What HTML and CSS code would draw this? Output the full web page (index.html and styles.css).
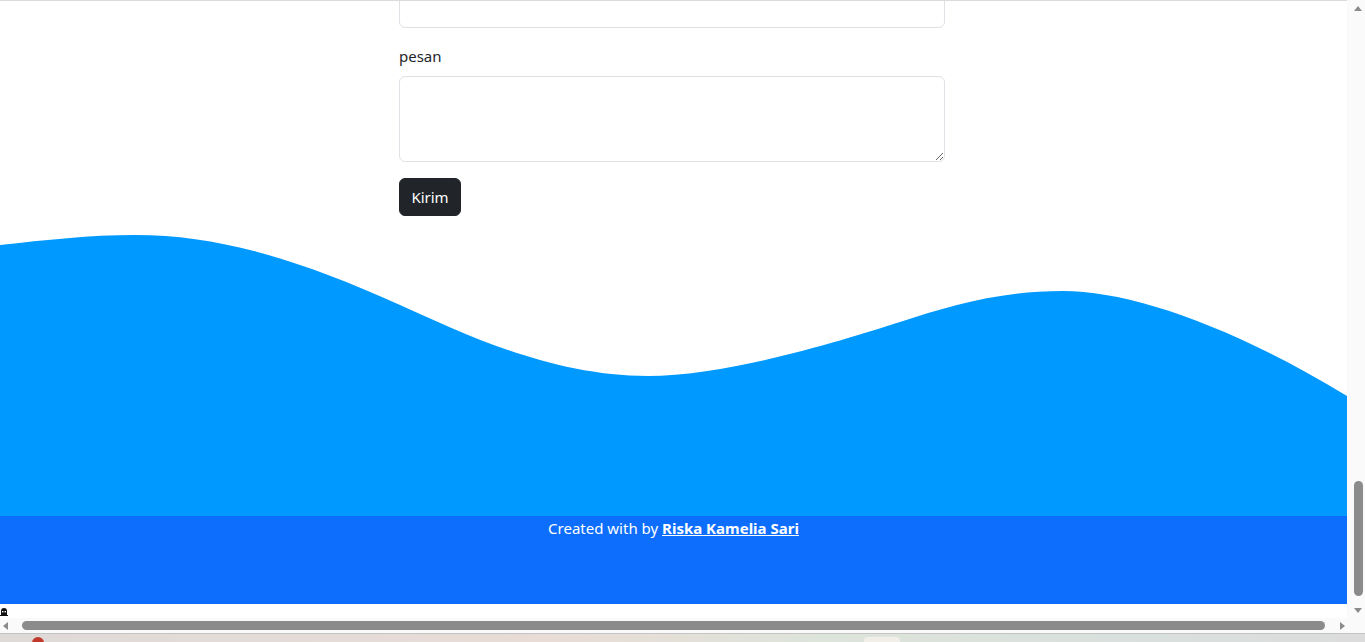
FILE: index.html
```html
<!DOCTYPE html>
<html lang="id">
<head>
<meta charset="utf-8">
<title>Kontak</title>
<link rel="stylesheet" href="styles.css">
</head>
<body>
<div class="screen">
  <div class="viewport">
    <form class="contact-form">
      <div class="field">
        <input class="form-control" type="email">
      </div>
      <div class="field">
        <label class="form-label" for="pesan">pesan</label>
        <textarea class="form-control textarea" id="pesan"></textarea>
      </div>
      <button class="btn-dark" type="button">Kirim</button>
    </form>
    <svg class="wave" viewBox="0 216 1347 300" preserveAspectRatio="none" xmlns="http://www.w3.org/2000/svg">
      <path fill="#0099ff" d="M0,245 C45,240 90,235 135,235 C220,235 300,260 400,305 C460,332 550,376 648,376 C730,376 850,338 900,322 C950,306 1000,291 1063,291 C1130,291 1230,325 1347,396 L1347,516 L0,516 Z"/>
    </svg>
    <footer class="footer">
      <p>Created with by <a href="#">Riska Kamelia Sari</a></p>
    </footer>
    <svg class="corner-icon" viewBox="0 0 8 10" xmlns="http://www.w3.org/2000/svg">
      <path d="M1,4 Q1,1 4,1 Q7,1 7,4 L7,8 L1,8 Z" fill="#111"/>
      <rect x="2" y="4" width="1.4" height="1.4" fill="#fff"/>
      <rect x="4.6" y="4" width="1.4" height="1.4" fill="#fff"/>
      <rect x="0" y="8" width="8" height="1" fill="#111"/>
    </svg>
  </div>
  <div class="vscroll">
    <span class="arrow up"></span>
    <div class="vtrack"><span class="vthumb"></span></div>
    <span class="arrow down"></span>
  </div>
  <div class="hscroll">
    <span class="arrow left"></span>
    <span class="hthumb"></span>
    <span class="arrow right"></span>
  </div>
  <div class="hcorner"></div>
  <div class="taskbar">
    <span class="tb-dot"></span>
    <span class="tb-btn"></span>
  </div>
</div>
</body>
</html>
```

FILE: styles.css
```css
html, body {
  margin: 0;
  padding: 0;
  height: 642px;
  overflow: hidden;
  background: #fff;
}

body {
  font-family: "Noto Sans", "Open Sans", sans-serif;
  font-size: 16px;
  line-height: 24px;
  color: #212529;
}

.screen {
  display: grid;
  grid-template-columns: 1347px 18px;
  grid-template-rows: 618px 15px 9px;
  width: 1365px;
  height: 642px;
}

.viewport {
  grid-column: 1;
  grid-row: 1;
  position: relative;
  overflow: hidden;
  border-top: 1px solid #dcdcdc;
  display: flex;
  flex-direction: column;
  background: #fff;
}

.contact-form {
  width: 546px;
  margin: -11px 0 0 399px;
  display: flex;
  flex-direction: column;
  align-items: flex-start;
}

.field {
  width: 100%;
  margin-bottom: 16px;
  display: flex;
  flex-direction: column;
}

.form-label {
  margin-bottom: 8px;
  line-height: 24px;
  font-size: 15px;
}

.form-control {
  box-sizing: border-box;
  width: 100%;
  height: 38px;
  border: 1px solid #dee2e6;
  border-radius: 6px;
  background: #fff;
  font: inherit;
  padding: 6px 12px;
  margin: 0;
  outline: none;
}

.textarea {
  height: 86px;
  resize: vertical;
  display: block;
}

.btn-dark {
  box-sizing: border-box;
  height: 38px;
  width: 62px;
  padding: 0;
  border: 1px solid #212529;
  border-radius: 6px;
  background: #212529;
  color: #fff;
  font-family: inherit;
  font-size: 15px;
  line-height: 24px;
  cursor: pointer;
}

.wave {
  display: block;
  width: 1347px;
  height: 300px;
  flex: none;
}

.footer {
  flex: none;
  height: 88px;
  background: #0d6efd;
  color: #fff;
  text-align: center;
}

.footer p {
  margin: 0;
  font-size: 15px;
  line-height: 24px;
}

.footer a {
  color: #fff;
  font-weight: 700;
  text-decoration: underline;
}

.corner-icon {
  position: absolute;
  left: 0;
  top: 606px;
  width: 8px;
  height: 10px;
}

/* vertical scrollbar */
.vscroll {
  grid-column: 2;
  grid-row: 1;
  background: #fafafa;
  display: flex;
  flex-direction: column;
  align-items: flex-start;
}

.arrow {
  width: 0;
  height: 0;
  display: block;
  flex: none;
}

.arrow.up {
  margin-top: 6px;
  margin-left: 7px;
  border-left: 4px solid transparent;
  border-right: 4px solid transparent;
  border-bottom: 5px solid #8b8b8b;
}

.arrow.down {
  margin: 0 0 5px 7px;
  border-left: 4px solid transparent;
  border-right: 4px solid transparent;
  border-top: 5px solid #8b8b8b;
}

.vtrack {
  flex: 1;
  display: flex;
  flex-direction: column;
  justify-content: flex-end;
  padding: 0 0 12px 7px;
}

.vthumb {
  display: block;
  width: 9px;
  height: 115px;
  border-radius: 5px;
  background: #8b8b8b;
}

/* horizontal scrollbar */
.hscroll {
  grid-column: 1;
  grid-row: 2;
  background: #fafafa;
  display: flex;
  align-items: center;
  padding: 0 0 0 3px;
}

.arrow.left {
  border-top: 4px solid transparent;
  border-bottom: 4px solid transparent;
  border-right: 5px solid #8b8b8b;
}

.hthumb {
  display: block;
  width: 1303px;
  height: 9px;
  margin-left: 14px;
  border-radius: 5px;
  background: #8b8b8b;
}

.arrow.right {
  margin-left: 15px;
  border-top: 4px solid transparent;
  border-bottom: 4px solid transparent;
  border-left: 5px solid #8b8b8b;
}

.hcorner {
  grid-column: 2;
  grid-row: 2;
  background: #fafafa;
}

.taskbar {
  grid-column: 1 / span 2;
  grid-row: 3;
  border-top: 1px solid #c4c4c4;
  background: linear-gradient(90deg, #dedad8 0%, #e9dcd6 40%, #dde4da 60%, #d9dfdd 85%, #dcdcdc 100%);
  position: relative;
  overflow: hidden;
}

.tb-dot {
  position: absolute;
  left: 32px;
  top: 3px;
  width: 12px;
  height: 12px;
  border-radius: 50%;
  background: #c0392b;
}

.tb-btn {
  position: absolute;
  left: 864px;
  top: 3px;
  width: 36px;
  height: 12px;
  border-radius: 4px;
  background: #f2eee8;
}
```
